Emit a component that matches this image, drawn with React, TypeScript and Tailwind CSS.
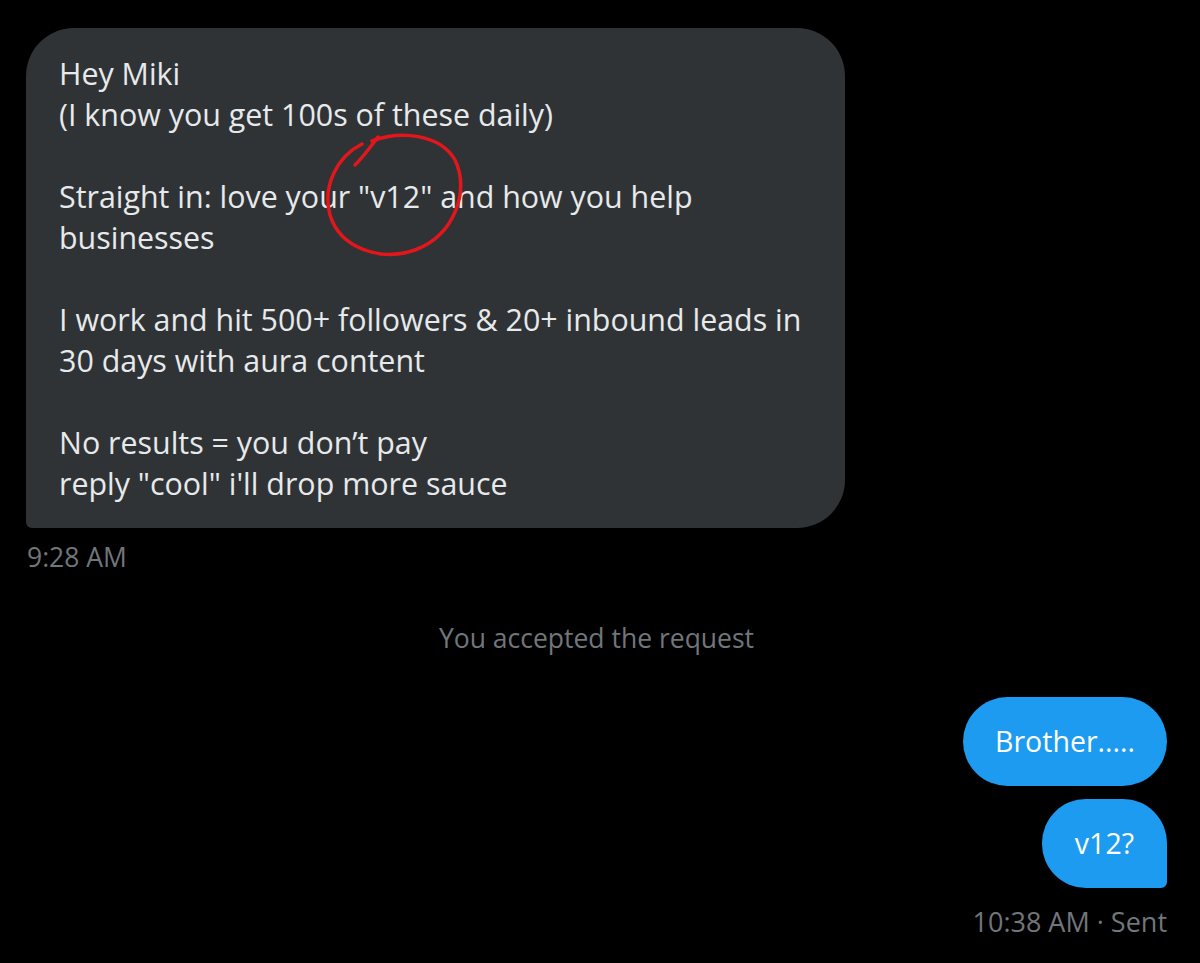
const lines = [
    'Hey Miki',
    '(I know you get 100s of these daily)',
    '',
    'Straight in: love your "v12" and how you help',
    'businesses',
    '',
    'I work and hit 500+ followers & 20+ inbound leads in',
    '30 days with aura content',
    '',
    'No results = you don’t pay',
    'reply "cool" i\'ll drop more sauce',
];

const App = () => {
    return (
        <div
            className="relative min-h-screen w-full bg-black pl-[26px] pr-[33px] pt-[28px]"
            style={{ fontFamily: '"Open Sans", "Noto Sans", sans-serif' }}
        >
            {/* Received message */}
            <div className="w-[819px] rounded-[48px] rounded-bl-[6px] bg-[#2f3336] pl-[33px] pr-[12px] pt-[25px] pb-[24px]">
                {lines.map((line, i) => (
                    <div
                        key={i}
                        className="h-[41px] text-[30.4px] font-medium leading-[41px] text-[#e7e9ea] whitespace-pre"
                    >
                        {line}
                    </div>
                ))}
            </div>
            <div className="mt-[14px] pl-[1px] text-[26.5px] leading-[30px] text-[#71767b]">9:28 AM</div>

            {/* System note */}
            <div className="mt-[51px] text-center text-[26.5px] leading-[30px] text-[#71767b]">
                You accepted the request
            </div>

            {/* Sent messages */}
            <div className="mt-[44px] flex flex-col items-end gap-[13px]">
                <div className="flex h-[89px] items-center rounded-full bg-[#1d9bf0] px-[32px] text-[28.5px] font-medium text-white">
                    Brother.....
                </div>
                <div className="flex h-[89px] items-center rounded-[44px] rounded-br-[6px] bg-[#1d9bf0] px-[33px] text-[28.5px] font-medium text-white">
                    v12?
                </div>
            </div>
            <div className="mt-[19px] text-right text-[27px] leading-[30px] text-[#71767b]">
                10:38 AM · Sent
            </div>

            {/* Hand-drawn annotation */}
            <svg
                className="pointer-events-none absolute left-[300px] top-[120px]"
                width="180"
                height="140"
                viewBox="0 0 180 140"
                fill="none"
                stroke="#e3161b"
                strokeWidth="3.5"
                strokeLinecap="round"
            >
                <path d="M55 45 C64 36, 71 26, 78 17" />
                <path d="M72 21 C100 10, 140 14, 155 40 C170 70, 155 115, 115 130 C80 142, 40 128, 30 95 C22 65, 38 36, 62 24" />
            </svg>
        </div>
    );
};

export default App;
